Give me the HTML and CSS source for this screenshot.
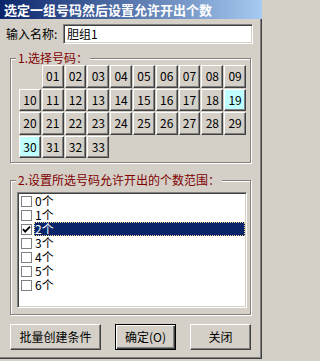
FILE: index.html
```html
<!DOCTYPE html>
<html lang="zh-CN">
<head>
<meta charset="utf-8">
<title>选定一组号码然后设置允许开出个数</title>
<link rel="stylesheet" href="styles.css">
</head>
<body>
<div class="window">
  <div class="titlebar">选定一组号码然后设置允许开出个数</div>
  <div class="name-row">
    <span class="label">输入名称:</span>
    <div class="textbox">胆组1</div>
  </div>
  <div class="group group-numbers">
    <span class="legend">1.选择号码：</span>
    <div class="num-grid">
      <button class="num first">01</button><button class="num">02</button><button class="num">03</button><button class="num">04</button><button class="num">05</button><button class="num">06</button><button class="num">07</button><button class="num">08</button><button class="num">09</button>
      <button class="num">10</button><button class="num">11</button><button class="num">12</button><button class="num">13</button><button class="num">14</button><button class="num">15</button><button class="num">16</button><button class="num">17</button><button class="num">18</button><button class="num hot">19</button>
      <button class="num">20</button><button class="num">21</button><button class="num">22</button><button class="num">23</button><button class="num">24</button><button class="num">25</button><button class="num">26</button><button class="num">27</button><button class="num">28</button><button class="num">29</button>
      <button class="num hot">30</button><button class="num">31</button><button class="num">32</button><button class="num">33</button>
    </div>
  </div>
  <div class="group group-range">
    <span class="legend">2.设置所选号码允许开出的个数范围：</span>
    <div class="listbox">
      <div class="item"><span class="check"></span><span class="item-text">0个</span></div>
      <div class="item"><span class="check"></span><span class="item-text">1个</span></div>
      <div class="item selected"><span class="check"><svg width="9" height="9" viewBox="0 0 9 9"><path d="M1 4.2 L3.2 6.6 L8 1.6" fill="none" stroke="#000" stroke-width="1.8"/></svg></span><span class="item-text">2个</span></div>
      <div class="item"><span class="check"></span><span class="item-text">3个</span></div>
      <div class="item"><span class="check"></span><span class="item-text">4个</span></div>
      <div class="item"><span class="check"></span><span class="item-text">5个</span></div>
      <div class="item"><span class="check"></span><span class="item-text">6个</span></div>
    </div>
  </div>
  <div class="actions">
    <button class="btn btn-wide">批量创建条件</button>
    <button class="btn btn-default">确定(O)</button>
    <button class="btn">关闭</button>
  </div>
</div>
</body>
</html>
```
FILE: styles.css
```css
html, body {
  margin: 0;
  padding: 0;
  background: #d4d0c8;
}
body {
  font-family: "Noto Sans CJK SC", "Liberation Sans", sans-serif;
  font-size: 12px;
  color: #000;
}
.window {
  width: 262px;
  height: 359px;
  box-sizing: border-box;
  border-right: 1px solid #404040;
  border-bottom: 1px solid #404040;
  box-shadow: inset -1px -1px 0 #808080;
  background: #d4d0c8;
  display: flex;
  flex-direction: column;
}
.titlebar {
  height: 19px;
  margin-right: -1px;
  background: linear-gradient(to right, #0a246a, #a6caf0);
  color: #fff;
  font-weight: bold;
  font-size: 13px;
  line-height: 19px;
  padding-left: 4px;
  white-space: nowrap;
  overflow: hidden;
}
.name-row {
  margin-top: 5px;
  height: 20px;
  display: flex;
  align-items: center;
  padding-left: 6px;
}
.label {
  width: 57px;
  line-height: 20px;
  white-space: nowrap;
}
.textbox {
  width: 190px;
  height: 20px;
  box-sizing: border-box;
  background: #fff;
  border: 1px solid;
  border-color: #808080 #fff #fff #808080;
  box-shadow: inset 1px 1px 0 #404040, inset -1px -1px 0 #d4d0c8;
  padding-left: 3px;
  line-height: 18px;
}
.group {
  position: relative;
  margin-left: 10px;
  width: 241px;
  box-sizing: border-box;
  border: 1px solid #808080;
  box-shadow: inset 1px 1px 0 #fff, 1px 1px 0 #fff;
}
.legend {
  position: absolute;
  top: -8px;
  left: 5px;
  padding: 0 2px;
  line-height: 14px;
  color: #800000;
  background: #d4d0c8;
  white-space: nowrap;
}
.group-numbers {
  margin-top: 14px;
  height: 105px;
  padding: 6px 0 0 8px;
}
.num-grid {
  width: 227px;
  display: grid;
  grid-template-columns: repeat(10, 1fr);
  grid-auto-rows: 22.5px;
  gap: 1px;
}
.num {
  margin: 0;
  padding: 0;
  font: inherit;
  color: #000;
  background: #d4d0c8;
  border: 1px solid;
  border-color: #fff #404040 #404040 #fff;
  box-shadow: inset -1px -1px 0 #808080;
  line-height: 18px;
  text-align: center;
}
.num.first {
  grid-column-start: 2;
}
.num.hot {
  background: #c0ffff;
}
.group-range {
  margin-top: 17px;
  height: 135px;
  padding: 11px 0 0 6px;
}
.listbox {
  width: 230px;
  height: 116px;
  box-sizing: border-box;
  background: #fff;
  border: 1px solid;
  border-color: #808080 #fff #fff #808080;
  box-shadow: inset 1px 1px 0 #404040, inset -1px -1px 0 #d4d0c8;
  padding: 1px 1px 0 1px;
  display: flex;
  flex-direction: column;
}
.item {
  height: 14px;
  display: flex;
  align-items: center;
}
.check {
  width: 11px;
  height: 11px;
  box-sizing: border-box;
  margin-left: 2px;
  border: 1px solid #808080;
  background: #fff;
  display: flex;
  align-items: center;
  justify-content: center;
  flex: none;
}
.check svg {
  display: block;
}
.item-text {
  margin-left: 2px;
  line-height: 14px;
  flex: 1;
  padding-left: 1px;
  height: 14px;
  box-sizing: border-box;
}
.item.selected .item-text {
  background: #0a246a;
  color: #fff;
  outline: 1px dotted #f0d890;
  outline-offset: -1px;
}
.actions {
  margin-top: 9px;
  margin-left: 10px;
  display: flex;
  gap: 14px;
}
.btn {
  margin: 0;
  padding: 0;
  width: 61px;
  height: 26px;
  box-sizing: border-box;
  font: inherit;
  color: #000;
  background: #d4d0c8;
  border: 1px solid;
  border-color: #fff #404040 #404040 #fff;
  box-shadow: inset -1px -1px 0 #808080;
  line-height: 22px;
  text-align: center;
}
.btn-wide {
  width: 91px;
}
.btn-default {
  border: 1px solid #000;
  box-shadow: inset 1px 1px 0 #fff, inset -1px -1px 0 #404040, inset -2px -2px 0 #808080;
}
```
